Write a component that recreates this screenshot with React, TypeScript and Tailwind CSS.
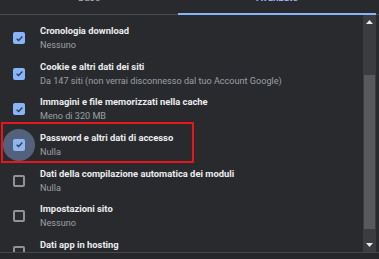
import React from "react";

const rows = [
  { t: "Cronologia download", s: "Nessuno", c: true },
  { t: "Cookie e altri dati dei siti", s: "Da 147 siti (non verrai disconnesso dal tuo Account Google)", c: true },
  { t: "Immagini e file memorizzati nella cache", s: "Meno di 320 MB", c: true },
  { t: "Password e altri dati di accesso", s: "Nulla", c: true, focus: true },
  { t: "Dati della compilazione automatica dei moduli", s: "Nulla", c: false },
  { t: "Impostazioni sito", s: "Nessuno", c: false },
  { t: "Dati app in hosting", s: "Nessuno", c: false },
];

function Box({ checked, focus }: { checked: boolean; focus?: boolean }) {
  return (
    <div className="relative w-[12px] h-[12px]">
      {focus && (
        <div className="absolute left-[-10px] top-[-10px] w-[32px] h-[32px] rounded-full bg-[#53627c]" />
      )}
      {checked ? (
        <div className={`relative w-[12px] h-[12px] rounded-[2px] flex items-center justify-center ${focus ? "bg-[#92b4ef]" : "bg-[#8ab4f8]"}`}>
          <svg width="9" height="9" viewBox="0 0 12 12">
            <path d="M2.2 6.3 L4.8 8.7 L9.8 3.4" fill="none" stroke="#2a3a55" strokeWidth="1.7" />
          </svg>
        </div>
      ) : (
        <div className="relative w-[12px] h-[12px] rounded-[2px] border-2 border-[#8f9297]" />
      )}
    </div>
  );
}

export default function App() {
  return (
    <div className="relative w-[379px] h-[259px] bg-[#292a2d] overflow-hidden flex flex-col" style={{ fontFamily: "Roboto, 'Liberation Sans', sans-serif" }}>
      <div className="flex h-[15px] border-b border-[#4a4c50]">
        <div className="w-[178px] flex justify-center">
          <span className="text-[10px] leading-[10px] mt-[-7px] text-[#9aa0a6] font-medium">Base</span>
        </div>
        <div className="flex-1 flex justify-center border-b-2 border-[#8ab4f8] mb-[-1px] mr-[3px]">
          <span className="text-[10px] leading-[10px] mt-[-7px] text-[#8ab4f8] font-bold">Avanzate</span>
        </div>
      </div>
      <div className="flex flex-1 min-h-0">
        <div className="flex-1 pt-[8px] overflow-hidden">
          {rows.map((r, i) => (
            <div key={i} className="h-[35.67px] flex">
              <div className="h-[30px] flex items-center">
                <div className="w-[40px] pl-[13px] flex items-center">
                  <Box checked={r.c} focus={r.focus} />
                </div>
                <div className="flex flex-col">
                  <div className="text-[9.4px] leading-[15px] text-[#ebedf0] font-bold whitespace-nowrap">{r.t}</div>
                  <div className="text-[9.1px] leading-[15px] text-[#9aa0a6] whitespace-nowrap">{r.s}</div>
                </div>
              </div>
            </div>
          ))}
        </div>
        <div className="w-[13px] mr-[3px] bg-[#3b3c3f] flex flex-col items-center">
          <div className="h-[14px] flex items-center justify-center">
            <svg width="7" height="4" viewBox="0 0 7 4"><path d="M0 4 L3.5 0 L7 4 Z" fill="#e8e8e8" /></svg>
          </div>
          <div className="h-[46px]" />
          <div className="w-[11px] h-[154px] bg-[#58595c]" />
          <div className="flex-1" />
          <div className="h-[14px] flex items-center justify-center">
            <svg width="7" height="4" viewBox="0 0 7 4"><path d="M0 0 L3.5 4 L7 0 Z" fill="#e8e8e8" /></svg>
          </div>
        </div>
      </div>
      <div className="h-[7px] border-t border-[#45474b] bg-[#26272a]" />
      <div className="absolute left-[1px] top-[122px] w-[193px] h-[41px] border-2 border-[#e8161b]" />
    </div>
  );
}
